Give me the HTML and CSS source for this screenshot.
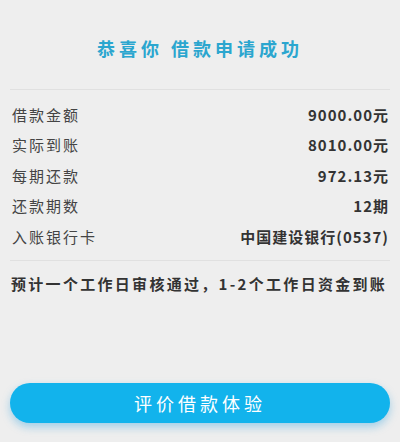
FILE: index.html
```html
<!DOCTYPE html>
<html lang="zh-CN">

<head>
    <meta charset="UTF-8">
    <meta name="viewport" content="width=device-width, initial-scale=1.0">
    <title>借款申请成功</title>
    <link rel="stylesheet" href="styles.css">
</head>

<body>

    <div class="page">
        <h1 class="title">恭喜你 借款申请成功</h1>

        <ul class="details">
            <li><span class="label">借款金额</span><span class="value">9000.00元</span></li>
            <li><span class="label">实际到账</span><span class="value">8010.00元</span></li>
            <li><span class="label">每期还款</span><span class="value">972.13元</span></li>
            <li><span class="label">还款期数</span><span class="value">12期</span></li>
            <li><span class="label">入账银行卡</span><span class="value">中国建设银行(0537)</span></li>
        </ul>

        <p class="note">预计一个工作日审核通过，1-2个工作日资金到账</p>

        <button class="rate-btn">评价借款体验</button>
    </div>

</body>

</html>
```

FILE: styles.css
```css
body {
    margin: 0;
    background-color: #eeeeee;
    font-family: "Noto Sans CJK SC", "Noto Sans", sans-serif;
    color: #333;
}

.page {
    display: flex;
    flex-direction: column;
    min-height: 100vh;
    box-sizing: border-box;
    padding: 0 10px 19px;
}

.title {
    margin: 0;
    padding: 36px 0 29px;
    font-size: 18px;
    line-height: 24px;
    font-weight: bold;
    letter-spacing: 4px;
    text-align: center;
    color: #2ba6cf;
    border-bottom: 1px solid #e0e0e0;
}

.details {
    list-style: none;
    margin: 0;
    padding: 9px 0 8.5px;
    border-bottom: 1px solid #e0e0e0;
}

.details li {
    display: flex;
    justify-content: space-between;
    align-items: center;
    height: 30.5px;
    padding: 0 1px 0 2px;
}

.label {
    font-size: 15px;
    letter-spacing: 2px;
    color: #444;
}

.value {
    font-size: 15px;
    font-weight: bold;
    letter-spacing: 1px;
    color: #333;
}

.note {
    margin: 11px 0 0;
    padding: 0 0 0 1px;
    font-size: 15px;
    line-height: 24px;
    font-weight: bold;
    letter-spacing: 2.3px;
    white-space: nowrap;
    color: #333;
}

.rate-btn {
    margin-top: auto;
    height: 40px;
    border: none;
    border-radius: 20px;
    background-color: #12b3ec;
    color: #fff;
    font-family: inherit;
    font-size: 18px;
    letter-spacing: 4px;
    box-shadow: 0 4px 8px rgba(18, 150, 220, 0.35);
}

.rate-btn:hover {
    cursor: pointer;
}
```
